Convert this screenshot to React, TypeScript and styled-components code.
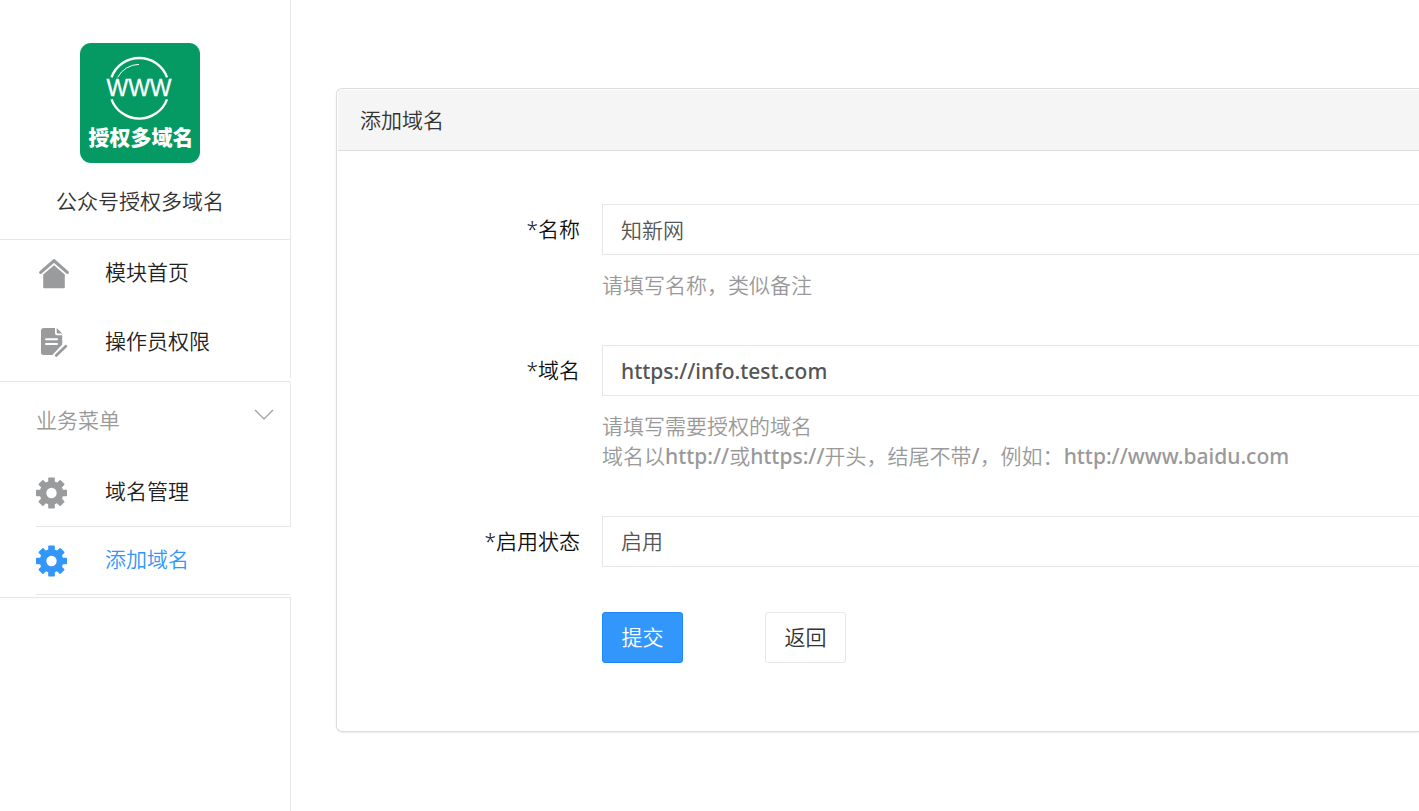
import React from "react";
import styled, { createGlobalStyle, css } from "styled-components";

const line = "#e7e7e7";
const blue = "#3296fa";

const GlobalStyle = createGlobalStyle`
  *, *::before, *::after { box-sizing: border-box; }
  body {
    margin: 0;
    background: #fff;
    color: #222;
    font-family: "Noto Sans", "Noto Sans CJK SC", sans-serif;
    font-size: 21px;
    font-weight: 350;
    line-height: 30px;
    overflow-x: hidden;
  }
  input, select, button { font: inherit; }
`;

const Page = styled.div`
  display: flex;
  min-height: 100vh;
`;

const Sidebar = styled.aside`
  display: flex;
  flex-direction: column;
  flex: 0 0 291px;
`;

const Brand = styled.div`
  display: flex;
  flex-direction: column;
  align-items: center;
  gap: 23px;
  padding: 43px 10px 23px 0;
  border-right: 1px solid ${line};
  border-bottom: 1px solid ${line};
  color: #333;
`;

const Logo = styled.svg`
  display: block;
  width: 120px;
  height: 120px;
`;

const NavGroup = styled.nav`
  padding-bottom: 3px;
  border-bottom: 1px solid ${line};
`;

const SubGroup = styled(NavGroup)`
  padding-bottom: 2px;
`;

const NavLink = styled.a`
  display: flex;
  align-items: center;
  height: 69px;
  padding: 0 0 6px 36px;
  border-right: 1px solid ${line};
  color: #222;
  text-decoration: none;
`;

const SubLink = styled(NavLink)<{ $active?: boolean }>`
  height: 68px;
  margin-left: 36px;
  padding: 0 0 4px;
  border-bottom: 1px solid ${line};
  ${(p) =>
    p.$active &&
    css`
      border-right-color: transparent;
      color: ${blue};
    `}
`;

const IconSlot = styled.span`
  display: flex;
  width: 69px;
  margin-top: 5px;
  color: #999b9d;
  ${SubLink}[aria-current] & {
    color: ${blue};
  }
`;

const GroupToggle = styled.button`
  display: flex;
  justify-content: space-between;
  align-items: center;
  width: 100%;
  height: 77px;
  padding: 0 16px 2px 36px;
  border: 0;
  border-right: 1px solid ${line};
  border-top-right-radius: 3px;
  background: none;
  color: #999;
  text-align: left;
  svg {
    margin-bottom: 9px;
  }
`;

const SidebarRest = styled.div`
  flex: 1;
  border-right: 1px solid ${line};
`;

const Main = styled.main`
  flex: 1;
  min-width: 0;
  padding: 88px 0 79px 45px;
`;

const Card = styled.section`
  padding: 1px 0 0 1px;
  border: 1px solid #dcdcdc;
  border-right: 0;
  border-radius: 6px 0 0 6px;
  box-shadow: 0 1px 2px rgba(0, 0, 0, 0.08);
`;

const CardTitle = styled.h1`
  margin: 0;
  padding: 15px 22px;
  border-bottom: 1px solid #dcdcdc;
  border-top-left-radius: 4px;
  background: #f5f5f5;
  color: #333;
  font-size: 21px;
  font-weight: 350;
  line-height: 30px;
`;

const Form = styled.form`
  display: flex;
  flex-direction: column;
  gap: 45px;
  padding: 53px 0 68px;
`;

const Field = styled.div`
  display: grid;
  grid-template-columns: 242px minmax(0, 1fr);
  column-gap: 22px;
`;

const Label = styled.label`
  padding-top: 10px;
  color: #111;
  text-align: right;
`;

const control = css`
  display: block;
  width: 100%;
  height: 51px;
  padding: 0 18px 2px;
  border: 1px solid ${line};
  border-right: 0;
  border-radius: 0;
  background: #fff;
  color: #555;
  outline: none;
`;

const TextInput = styled.input`
  ${control}
  &[type="url"] {
    padding-bottom: 0;
    font-weight: 500;
  }
`;

const Select = styled.select`
  ${control}
  appearance: none;
`;

const Help = styled.p`
  margin: 15px 0 0;
  color: #999;
`;

const HelpLine = styled.span`
  display: block;
`;

const Url = styled.span`
  font-weight: 500;
`;

const Actions = styled.div`
  display: flex;
  grid-column: 2;
  gap: 82px;
`;

const Button = styled.button<{ $primary?: boolean }>`
  width: 81px;
  height: 51px;
  padding: 0 0 2px;
  border: 1px solid ${(p) => (p.$primary ? "#1a88f8" : line)};
  border-radius: 3px;
  background: ${(p) => (p.$primary ? blue : "#fff")};
  color: ${(p) => (p.$primary ? "#fff" : "#333")};
`;

const BrandLogo = () => (
  <Logo viewBox="0 0 120 120" role="img" aria-label="授权多域名">
    <rect width="120" height="120" rx="11" fill="#059a64" />
    <g fill="none" stroke="#fff">
      <path d="M31.500 34.300A29.600 29.600 0 0 1 87 34.300M31.500 56.300A29.600 29.600 0 0 0 87 56.300" strokeWidth="2.400" />
      <path d="M37.700 34.300A24.500 24.500 0 0 1 59 21.400" strokeWidth="1" />
    </g>
    <text x="59" y="53" fill="#fff" stroke="#fff" strokeWidth="0.300" textAnchor="middle" fontFamily="Liberation Sans, sans-serif" fontSize="23" fontWeight="400">
      WWW
    </text>
    <text x="61" y="102" fill="#fff" textAnchor="middle" fontFamily="Noto Sans CJK SC, sans-serif" fontSize="21" fontWeight="900">
      授权多域名
    </text>
  </Logo>
);

const HomeIcon = () => (
  <svg width="36" height="32" viewBox="0 0 36 32" aria-hidden="true">
    <path d="M4.700 14.400 18 2.700 31.300 14.400" fill="none" stroke="currentColor" strokeWidth="3.200" strokeLinecap="round" strokeLinejoin="round" />
    <path d="M18 7.200 28.800 16.600V29.400a.8.8 0 0 1-.8.8H8a.8.8 0 0 1-.8-.8V16.600Z" fill="currentColor" />
  </svg>
);

const DocumentIcon = () => (
  <svg width="36" height="32" viewBox="0 1 36 32" aria-hidden="true">
    <path
      d="M8 2H19v5.200a2 2 0 0 0 2 2h5.200V18.500L16.400 29H7.500A2.500 2.500 0 0 1 5 26.500V5A3 3 0 0 1 8 2Z"
      fill="currentColor"
    />
    <path d="M20.700 2 26.200 7.500H21.700a1 1 0 0 1-1-1Z" fill="currentColor" />
    <path d="M10 13.200H21M10 18H21" stroke="#fff" strokeWidth="2" strokeLinecap="round" />
    <path d="M20.200 29.400 29.800 20.200" stroke="currentColor" strokeWidth="2.800" strokeLinecap="round" />
  </svg>
);

const GearIcon = () => (
  <svg width="31" height="32" viewBox="0 0 31 32" aria-hidden="true">
    <g fill="currentColor">
      {[0, 45, 90, 135].map((angle) => (
        <rect key={angle} x="12.200" y="0.500" width="6.600" height="31" rx="0.800" transform={`rotate(${angle} 15.5 16)`} />
      ))}
      <circle cx="15.500" cy="16" r="11.800" />
    </g>
    <circle cx="15.500" cy="16" r="5.200" fill="#fff" />
  </svg>
);

const ChevronIcon = () => (
  <svg width="20" height="12" viewBox="0 0 20 12" aria-hidden="true">
    <path d="M1 1 10 10 19 1" fill="none" stroke="#999" strokeWidth="1.200" />
  </svg>
);

export default function App() {
  return (
    <>
      <GlobalStyle />
      <Page>
        <Sidebar>
          <Brand>
            <BrandLogo />
            <span>公众号授权多域名</span>
          </Brand>
          <NavGroup>
            <NavLink href="#home">
              <IconSlot><HomeIcon /></IconSlot>
              模块首页
            </NavLink>
            <NavLink href="#operators">
              <IconSlot><DocumentIcon /></IconSlot>
              操作员权限
            </NavLink>
          </NavGroup>
          <SubGroup>
            <GroupToggle type="button" aria-expanded="true">
              业务菜单
              <ChevronIcon />
            </GroupToggle>
            <SubLink href="#domains">
              <IconSlot><GearIcon /></IconSlot>
              域名管理
            </SubLink>
            <SubLink href="#add" $active aria-current="page">
              <IconSlot><GearIcon /></IconSlot>
              添加域名
            </SubLink>
          </SubGroup>
          <SidebarRest />
        </Sidebar>
        <Main>
          <Card>
            <CardTitle>添加域名</CardTitle>
            <Form onSubmit={(e) => e.preventDefault()}>
              <Field>
                <Label htmlFor="name">*名称</Label>
                <div>
                  <TextInput id="name" type="text" defaultValue="知新网" />
                  <Help>请填写名称，类似备注</Help>
                </div>
              </Field>
              <Field>
                <Label htmlFor="domain">*域名</Label>
                <div>
                  <TextInput id="domain" type="url" defaultValue="https://info.test.com" />
                  <Help>
                    <HelpLine>请填写需要授权的域名</HelpLine>
                    <HelpLine>
                      域名以<Url>http://</Url>或<Url>https://</Url>开头，结尾不带<Url>/</Url>，例如：<Url>http://www.baidu.com</Url>
                    </HelpLine>
                  </Help>
                </div>
              </Field>
              <Field>
                <Label htmlFor="status">*启用状态</Label>
                <Select id="status" defaultValue="on">
                  <option value="on">启用</option>
                  <option value="off">禁用</option>
                </Select>
              </Field>
              <Field>
                <Actions>
                  <Button type="submit" $primary>提交</Button>
                  <Button type="button">返回</Button>
                </Actions>
              </Field>
            </Form>
          </Card>
        </Main>
      </Page>
    </>
  );
}
